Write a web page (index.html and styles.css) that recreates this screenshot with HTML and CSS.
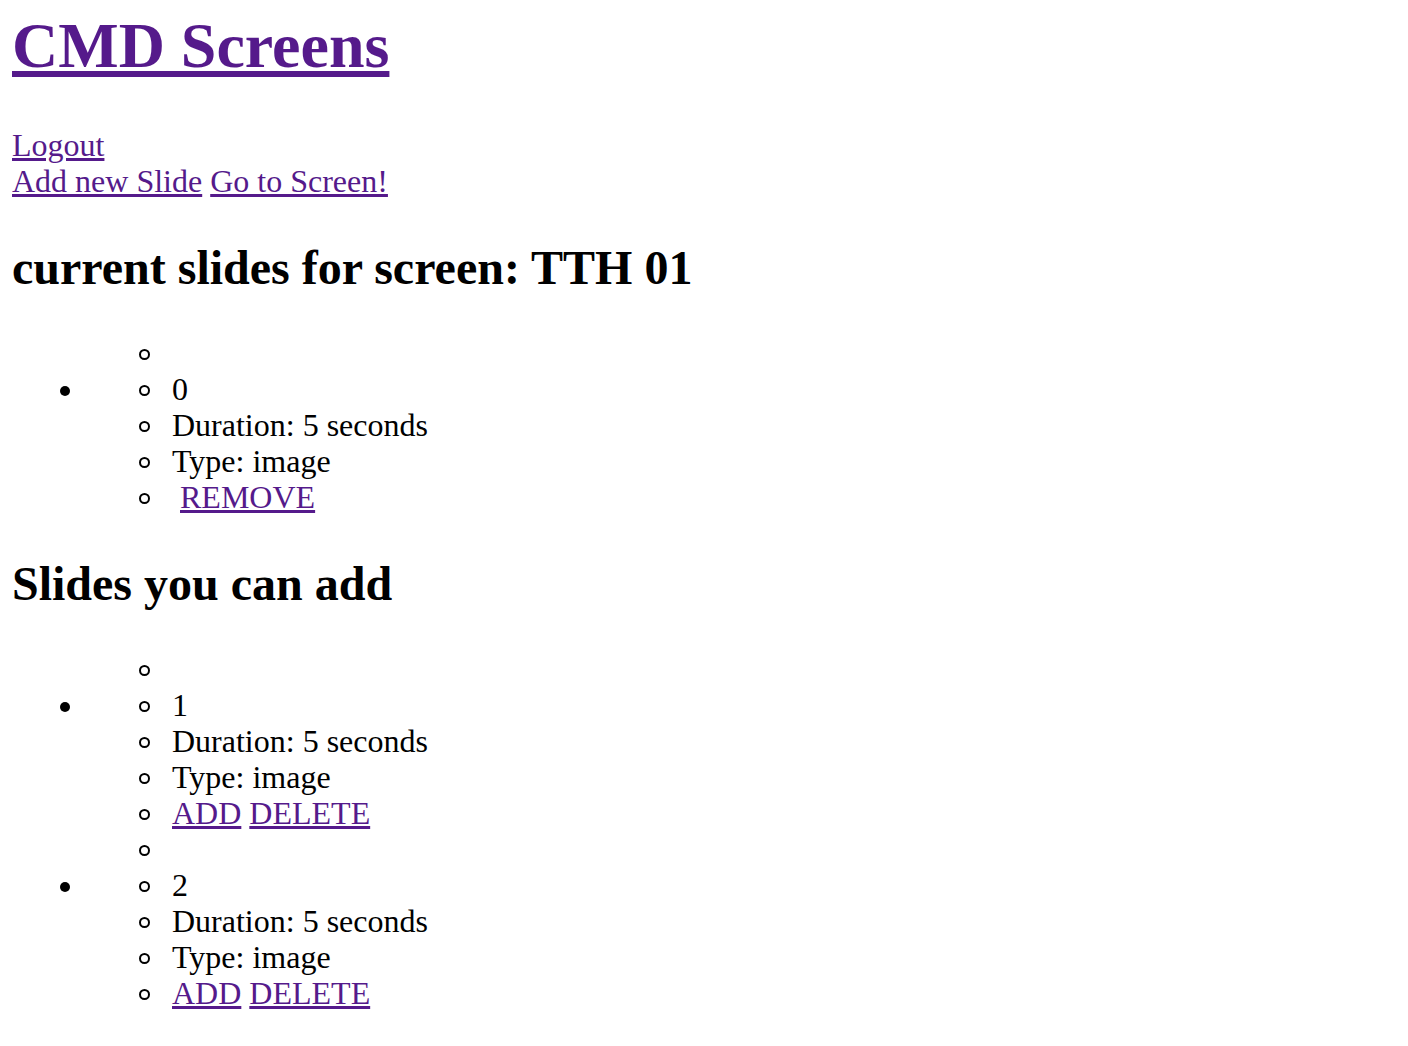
FILE: index.html
```html
<!DOCTYPE html>
<html>
<head>
<meta charset="utf-8">
<title>CMD Screens</title>
<link rel="stylesheet" href="styles.css">
</head>
<body>
<h1 class="title"><a href="#">CMD Screens</a></h1>
<div class="nav">
  <a href="#">Logout</a><br>
  <a href="#">Add new Slide</a> <a href="#">Go to Screen!</a>
</div>
<h2 class="heading">current slides for screen: TTH 01</h2>
<ul class="slides">
  <li class="slide">
    <ul class="details">
      <li></li>
      <li>0</li>
      <li>Duration: 5 seconds</li>
      <li>Type: image</li>
      <li>&nbsp;<a href="#">REMOVE</a></li>
    </ul>
  </li>
</ul>
<h2 class="heading">Slides you can add</h2>
<ul class="slides">
  <li class="slide">
    <ul class="details">
      <li></li>
      <li>1</li>
      <li>Duration: 5 seconds</li>
      <li>Type: image</li>
      <li><a href="#">ADD</a> <a href="#">DELETE</a></li>
    </ul>
  </li>
  <li class="slide">
    <ul class="details">
      <li></li>
      <li>2</li>
      <li>Duration: 5 seconds</li>
      <li>Type: image</li>
      <li><a href="#">ADD</a> <a href="#">DELETE</a></li>
    </ul>
  </li>
</ul>
</body>
</html>
```

FILE: styles.css
```css
html, body {
  background: #ffffff;
}
body {
  margin: 0 12px;
  font-family: "Liberation Serif", "Times New Roman", serif;
  font-size: 32px;
  line-height: 36px;
  color: #000000;
}
a {
  color: #551a8b;
  text-decoration: underline;
}
.title {
  font-size: 64px;
  line-height: 72px;
  font-weight: bold;
  margin: 10px 0 45px;
}
.nav {
  margin: 0;
}
.heading {
  font-size: 48px;
  line-height: 54px;
  font-weight: bold;
  margin: 42px 0 40px;
}
.slides {
  list-style: none;
  margin: 32px 0;
  padding-left: 80px;
}
.slide {
  position: relative;
}
.slide::before {
  content: "";
  position: absolute;
  left: -32px;
  top: 51px;
  width: 10px;
  height: 10px;
  border-radius: 50%;
  background: #000000;
}
.details {
  list-style: none;
  margin: 0;
  padding-left: 80px;
}
.details li {
  position: relative;
  min-height: 36px;
}
.details li::before {
  content: "";
  position: absolute;
  left: -33px;
  top: 14px;
  width: 11px;
  height: 11px;
  box-sizing: border-box;
  border: 2px solid #000000;
  border-radius: 50%;
}
```
